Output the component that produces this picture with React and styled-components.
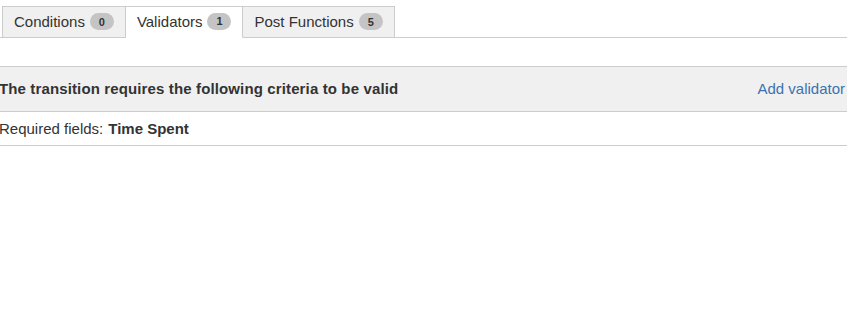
import React from "react";
import styled, { createGlobalStyle } from "styled-components";

const Global = createGlobalStyle`
  html, body { margin: 0; padding: 0; background: #fff; overflow: hidden; }
  body { font-family: Arial, "Liberation Sans", sans-serif; font-size: 15px; color: #333; }
`;

const Page = styled.div`
  width: 847px;
  padding-top: 6px;
`;

const TabBar = styled.ul`
  display: flex;
  list-style: none;
  margin: 0;
  padding: 0 0 0 2px;
  border-bottom: 1px solid #ccc;
  height: 31px;
`;

const Tab = styled.li`
  display: flex;
  align-items: center;
  gap: 5px;
  box-sizing: border-box;
  padding: 0 11px 1px 11px;
  border: 1px solid #ccc;
  border-left: ${p => (p.$first ? "1px solid #ccc" : "none")};
  border-bottom: ${p => (p.$active ? "1px solid #fff" : "none")};
  background: ${p => (p.$active ? "#fff" : "#f0f0f0")};
  color: #333;
  height: ${p => (p.$active ? "32px" : "31px")};
  padding-bottom: ${p => (p.$active ? "2px" : "1px")};
`;

const Badge = styled.span`
  display: inline-flex;
  align-items: center;
  justify-content: center;
  min-width: 24px;
  height: 17px;
  padding: 0 6px;
  box-sizing: border-box;
  border-radius: 9px;
  background: #c4c4c4;
  color: #333;
  font-size: 11px;
  font-weight: bold;
`;

const Section = styled.div`
  margin-top: 28px;
`;

const Header = styled.div`
  display: flex;
  justify-content: space-between;
  align-items: center;
  height: 44px;
  padding-bottom: 1px;
  box-sizing: border-box;
  height: 46px;
  background: #f0f0f0;
  border-top: 1px solid #ccc;
  border-bottom: 1px solid #ccc;
  margin-left: -1px;
`;

const Title = styled.h3`
  margin: 0;
  font-size: 15px;
  font-weight: bold;
  letter-spacing: 0.13px;
  color: #333;
`;

const Link = styled.a`
  color: #3b73af;
  text-decoration: none;
  margin-right: 2px;
`;

const Row = styled.div`
  display: flex;
  align-items: center;
  height: 33px;
  border-bottom: 1px solid #ccc;
  margin-left: -1px;
  gap: 5px;
`;

const Strong = styled.strong`
  font-weight: bold;
`;

export default function App() {
  return (
    <Page>
      <Global />
      <TabBar>
        <Tab $first>Conditions <Badge>0</Badge></Tab>
        <Tab $active>Validators <Badge>1</Badge></Tab>
        <Tab>Post Functions <Badge>5</Badge></Tab>
      </TabBar>
      <Section>
        <Header>
          <Title>The transition requires the following criteria to be valid</Title>
          <Link href="#">Add validator</Link>
        </Header>
        <Row>
          <span>Required fields:</span>
          <Strong>Time Spent</Strong>
        </Row>
      </Section>
    </Page>
  );
}
